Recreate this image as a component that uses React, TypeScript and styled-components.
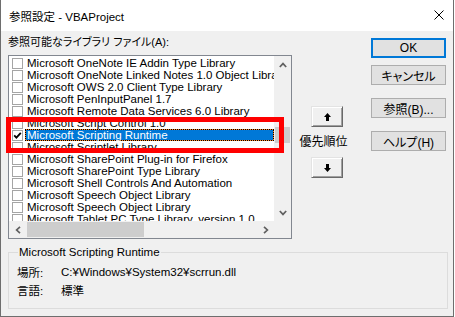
import React from "react";
import styled, { createGlobalStyle } from "styled-components";

const GlobalStyle = createGlobalStyle`
	html, body {
		margin: 0;
		background: #ffffff;
	}
	body {
		font-family: "Liberation Sans", "Noto Sans CJK JP", sans-serif;
		font-size: 11.5px;
		color: #000;
	}
`;

const uiFont = `"Liberation Sans", "Noto Sans CJK JP", sans-serif`;

type LibraryRow = {
	name: string;
	checked?: boolean;
	selected?: boolean;
};

const libraries: LibraryRow[] = [
	{ name: "Microsoft OneNote IE Addin Type Library" },
	{ name: "Microsoft OneNote Linked Notes 1.0 Object Library" },
	{ name: "Microsoft OWS 2.0 Client Type Library" },
	{ name: "Microsoft PenInputPanel 1.7" },
	{ name: "Microsoft Remote Data Services 6.0 Library" },
	{ name: "Microsoft Script Control 1.0" },
	{ name: "Microsoft Scripting Runtime", checked: true, selected: true },
	{ name: "Microsoft Scriptlet Library" },
	{ name: "Microsoft SharePoint Plug-in for Firefox" },
	{ name: "Microsoft SharePoint Type Library" },
	{ name: "Microsoft Shell Controls And Automation" },
	{ name: "Microsoft Speech Object Library" },
	{ name: "Microsoft Speech Object Library" },
	{ name: "Microsoft Tablet PC Type Library, version 1.0" },
];

const Window = styled.div`
	position: relative;
	width: 454px;
	height: 317px;
	box-sizing: border-box;
	border: 1px solid #6e6e6e;
	border-top: none;
	background: #f0f0f0;
	display: flex;
	flex-direction: column;
	font-family: ${uiFont};
	font-feature-settings: "palt";
`;

const TitleBar = styled.div`
	height: 31px;
	background: #ffffff;
	display: flex;
	align-items: center;
	justify-content: space-between;
	padding: 0 9px 0 8px;
	font-size: 11.5px;
`;

const CloseGlyph = styled.svg`
	display: block;
	margin-top: -1px;
`;

const TopSection = styled.div`
	display: flex;
	align-items: flex-start;
`;

const LeftCol = styled.div`
	width: 284px;
	margin-left: 7px;
	padding-top: 3px;
`;

const ListLabel = styled.div`
	font-size: 11px;
	line-height: 16px;
	height: 16px;
	margin-bottom: 5px;
	white-space: nowrap;
`;

const ListBox = styled.div`
	height: 184px;
	box-sizing: border-box;
	border: 1px solid #828790;
	background: #fff;
	display: grid;
	grid-template-columns: 265px 17px;
	grid-template-rows: 165px 17px;
`;

const RowsArea = styled.div`
	overflow: hidden;
	padding-top: 1px;
`;

const Row = styled.div`
	display: flex;
	align-items: center;
	height: 12px;
	font-size: 11.5px;
	font-feature-settings: normal;
`;

const CheckBox = styled.div`
	width: 11px;
	height: 11px;
	box-sizing: border-box;
	margin-left: 3px;
	margin-right: 2px;
	border: 1px solid #a5a5a5;
	background: #fff;
	flex: none;
	display: flex;
	align-items: center;
	justify-content: center;
`;

const RowLabel = styled.div<{ $selected?: boolean }>`
	flex: 1;
	height: 12px;
	box-sizing: border-box;
	line-height: 10px;
	padding-left: 1px;
	white-space: nowrap;
	border: 1px ${(p) => (p.$selected ? "dotted #000" : "solid transparent")};
	color: ${(p) => (p.$selected ? "#fff" : "#000")};
	background: ${(p) =>
		p.$selected
			? "linear-gradient(#0078d7, #0078d7) padding-box, #ff8728 border-box"
			: "transparent"};
`;

const VScroll = styled.div`
	background: #f0f0f0;
	display: flex;
	flex-direction: column;
	align-items: center;
`;

const HScroll = styled.div`
	background: #f0f0f0;
	display: flex;
	align-items: center;
`;

const ScrollCorner = styled.div`
	background: #f0f0f0;
`;

const ArrowCell = styled.div`
	width: 17px;
	height: 17px;
	flex: none;
	display: flex;
	align-items: center;
	justify-content: center;
`;

const VTrack = styled.div`
	flex: 1;
	width: 100%;
	display: flex;
	justify-content: center;
	padding-top: 54px;
	box-sizing: border-box;
`;

const VThumb = styled.div`
	width: 15px;
	height: 16px;
	background: #cdcdcd;
`;

const HTrack = styled.div`
	flex: 1;
	height: 100%;
	display: flex;
	align-items: center;
	padding-left: 1px;
`;

const HThumb = styled.div`
	width: 117px;
	height: 15px;
	background: #cdcdcd;
`;

const MidCol = styled.div`
	width: 52px;
	margin-left: 7px;
	padding-top: 75px;
	display: flex;
	flex-direction: column;
	align-items: center;
`;

const OrderButton = styled.div`
	width: 32px;
	height: 21px;
	box-sizing: border-box;
	margin-left: 4px;
	background: #f0f0f0;
	border: 1px solid;
	border-color: #e3e3e3 #696969 #696969 #e3e3e3;
	box-shadow: inset 1px 1px 0 #fff, inset -1px -1px 0 #a0a0a0;
	display: flex;
	align-items: center;
	justify-content: center;
`;

const OrderLabel = styled.div`
	height: 30px;
	line-height: 30px;
	font-size: 12px;
	margin-right: 3px;
	white-space: nowrap;
`;

const RightCol = styled.div`
	width: 75px;
	margin-left: 20px;
	padding-top: 7px;
	display: flex;
	flex-direction: column;
`;

const DialogButton = styled.div<{ $default?: boolean; $gap: number }>`
	height: 20px;
	box-sizing: border-box;
	margin-top: ${(p) => p.$gap}px;
	background: #e1e1e1;
	border: 1px solid ${(p) => (p.$default ? "#0078d7" : "#adadad")};
	box-shadow: ${(p) => (p.$default ? "inset 0 0 0 1px #0078d7" : "none")};
	display: flex;
	align-items: center;
	justify-content: center;
	font-size: 12px;
	white-space: nowrap;
`;

const GroupBox = styled.fieldset`
	margin: 6px 5px 0 7px;
	padding: 4px 8px 9px 8px;
	border: 1px solid #dcdcdc;
	min-width: 0;
	display: grid;
	grid-template-columns: 44px 1fr;
	grid-auto-rows: 18px;
	align-items: center;
`;

const GroupTitle = styled.legend`
	padding: 0 1px;
	margin-left: 1px;
	line-height: 14px;
`;

const InfoText = styled.div`
	white-space: nowrap;
`;

const Highlight = styled.div`
	position: absolute;
	left: 5px;
	top: 117px;
	width: 278px;
	height: 36px;
	box-sizing: border-box;
	border: 5px solid #ff0000;
	pointer-events: none;
`;

const Chevron = ({ dir }: { dir: "up" | "down" | "left" | "right" }) => {
	const rot = { up: 0, right: 90, down: 180, left: 270 }[dir];
	return (
		<svg width="8" height="8" viewBox="0 0 8 8" style={{ transform: `rotate(${rot}deg)` }}>
			<polyline
				points="0.8,6 4,2.6 7.2,6"
				fill="none"
				stroke="#606060"
				strokeWidth="1.7"
			/>
		</svg>
	);
};

const OrderArrow = ({ down }: { down?: boolean }) => (
	<svg
		width="7"
		height="8"
		viewBox="0 0 7 8"
		style={down ? { transform: "rotate(180deg)" } : undefined}
	>
		<polygon points="3.5,0 7,4 5,4 5,8 2,8 2,4 0,4" fill="#000" />
	</svg>
);

const CheckMark = () => (
	<svg width="9" height="9" viewBox="0 0 9 9">
		<polyline
			points="1.2,4.4 3.4,6.6 7.8,1.8"
			fill="none"
			stroke="#000"
			strokeWidth="1.8"
		/>
	</svg>
);

const App = (): JSX.Element => {
	return (
		<>
			<GlobalStyle />
			<Window>
				<TitleBar>
					<span>参照設定 - VBAProject</span>
					<CloseGlyph width="10" height="10" viewBox="0 0 10 10">
						<path d="M0.5 0.5 L9.5 9.5 M9.5 0.5 L0.5 9.5" stroke="#000" strokeWidth="1" />
					</CloseGlyph>
				</TitleBar>
				<TopSection>
					<LeftCol>
						<ListLabel>参照可能なライブラリ ファイル(A):</ListLabel>
						<ListBox>
							<RowsArea>
								{libraries.map((lib, i) => (
									<Row key={`${lib.name}${i}`}>
										<CheckBox>{lib.checked && <CheckMark />}</CheckBox>
										<RowLabel $selected={lib.selected}>{lib.name}</RowLabel>
									</Row>
								))}
							</RowsArea>
							<VScroll>
								<ArrowCell>
									<Chevron dir="up" />
								</ArrowCell>
								<VTrack>
									<VThumb />
								</VTrack>
								<ArrowCell>
									<Chevron dir="down" />
								</ArrowCell>
							</VScroll>
							<HScroll>
								<ArrowCell>
									<Chevron dir="left" />
								</ArrowCell>
								<HTrack>
									<HThumb />
								</HTrack>
								<ArrowCell>
									<Chevron dir="right" />
								</ArrowCell>
							</HScroll>
							<ScrollCorner />
						</ListBox>
					</LeftCol>
					<MidCol>
						<OrderButton>
							<OrderArrow />
						</OrderButton>
						<OrderLabel>優先順位</OrderLabel>
						<OrderButton>
							<OrderArrow down />
						</OrderButton>
					</MidCol>
					<RightCol>
						<DialogButton $default $gap={0}>OK</DialogButton>
						<DialogButton $gap={7}>キャンセル</DialogButton>
						<DialogButton $gap={13}>参照(B)...</DialogButton>
						<DialogButton $gap={13}>ヘルプ(H)</DialogButton>
					</RightCol>
				</TopSection>
				<GroupBox>
					<GroupTitle>Microsoft Scripting Runtime</GroupTitle>
					<InfoText>場所:</InfoText>
					<InfoText>C:¥Windows¥System32¥scrrun.dll</InfoText>
					<InfoText>言語:</InfoText>
					<InfoText>標準</InfoText>
				</GroupBox>
				<Highlight />
			</Window>
		</>
	);
};

export default App;
